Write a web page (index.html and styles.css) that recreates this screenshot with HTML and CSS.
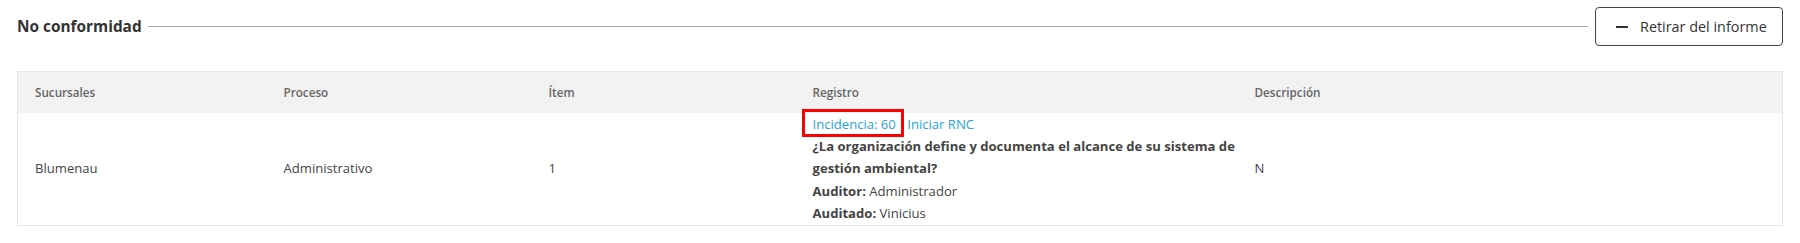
FILE: index.html
```html
<!DOCTYPE html>
<html lang="es">
<head>
<meta charset="utf-8">
<title>No conformidad</title>
<link rel="stylesheet" href="styles.css">
</head>
<body>
<div class="panel">
  <div class="section-head">
    <h2 class="section-title">No conformidad</h2>
    <span class="rule"></span>
    <button class="btn-outline" type="button">
      <svg class="btn-icon" width="12" height="12" viewBox="0 0 12 12" aria-hidden="true"><rect x="0" y="5" width="12" height="2" fill="#333"/></svg>
      <span>Retirar del informe</span>
    </button>
  </div>
  <table class="grid">
    <colgroup>
      <col class="c1"><col class="c2"><col class="c3"><col class="c4"><col class="c5">
    </colgroup>
    <thead>
      <tr>
        <th>Sucursales</th>
        <th>Proceso</th>
        <th>Ítem</th>
        <th>Registro</th>
        <th>Descripción</th>
      </tr>
    </thead>
    <tbody>
      <tr>
        <td>Blumenau</td>
        <td>Administrativo</td>
        <td>1</td>
        <td class="registro">
          <div class="links"><a class="link marked" href="#">Incidencia: 60</a> <a class="link" href="#">Iniciar RNC</a></div>
          <div class="question">¿La organización define y documenta el alcance de su sistema de gestión ambiental?</div>
          <div><b>Auditor:</b> Administrador</div>
          <div><b>Auditado:</b> Vinicius</div>
        </td>
        <td>N</td>
      </tr>
    </tbody>
  </table>
</div>
</body>
</html>
```

FILE: styles.css
```css
* { box-sizing: border-box; }
html, body { margin: 0; background: #fff; }
body {
  font-family: "Open Sans", "Noto Sans", "Liberation Sans", sans-serif;
  color: #444;
}
.panel {
  padding: 7px 17px 0 17px;
}
.section-head {
  display: flex;
  align-items: center;
  height: 39px;
}
.section-title {
  margin: 0;
  font-size: 15.4px;
  font-weight: 700;
  color: #333;
  white-space: nowrap;
}
.rule {
  flex: 1;
  height: 1px;
  background: #aaa;
  margin: 0 7px 0 6px;
}
.btn-outline {
  display: flex;
  align-items: center;
  gap: 12px;
  height: 39px;
  width: 188px;
  padding: 0 0 0 20px;
  border: 1px solid #444;
  border-radius: 4px;
  background: #fff;
  font-family: inherit;
  font-size: 14.4px;
  color: #333;
  cursor: pointer;
}
.btn-icon { display: block; flex: none; }
.grid {
  margin-top: 25px;
  width: 1766px;
  border-collapse: collapse;
  table-layout: fixed;
  border: 1px solid #e6e6e6;
  font-size: 13.1px;
}
.c1 { width: 249px; }
.c2 { width: 265px; }
.c3 { width: 264px; }
.c4 { width: 442px; }
.grid th {
  background: #f2f2f2;
  height: 41px;
  text-align: left;
  font-weight: 600;
  font-size: 11.7px;
  color: #666;
  padding: 0 8px 0 17px;
}
.grid td {
  padding: 0 8px 0 17px;
  vertical-align: middle;
  color: #444;
  line-height: 22.4px;
  font-weight: 400;
}
.grid td.registro {
  vertical-align: top;
  padding-right: 0;
}
.registro b { font-weight: 700; }
.question { font-weight: 700; }
.link {
  color: #29a3d6;
  text-decoration: none;
}
.marked {
  position: relative;
  margin-right: 8px;
}
.marked::after {
  content: "";
  position: absolute;
  left: -11px;
  right: -8px;
  top: -6px;
  bottom: -4px;
  border: 3px solid #ff0000;
  pointer-events: none;
}
```
